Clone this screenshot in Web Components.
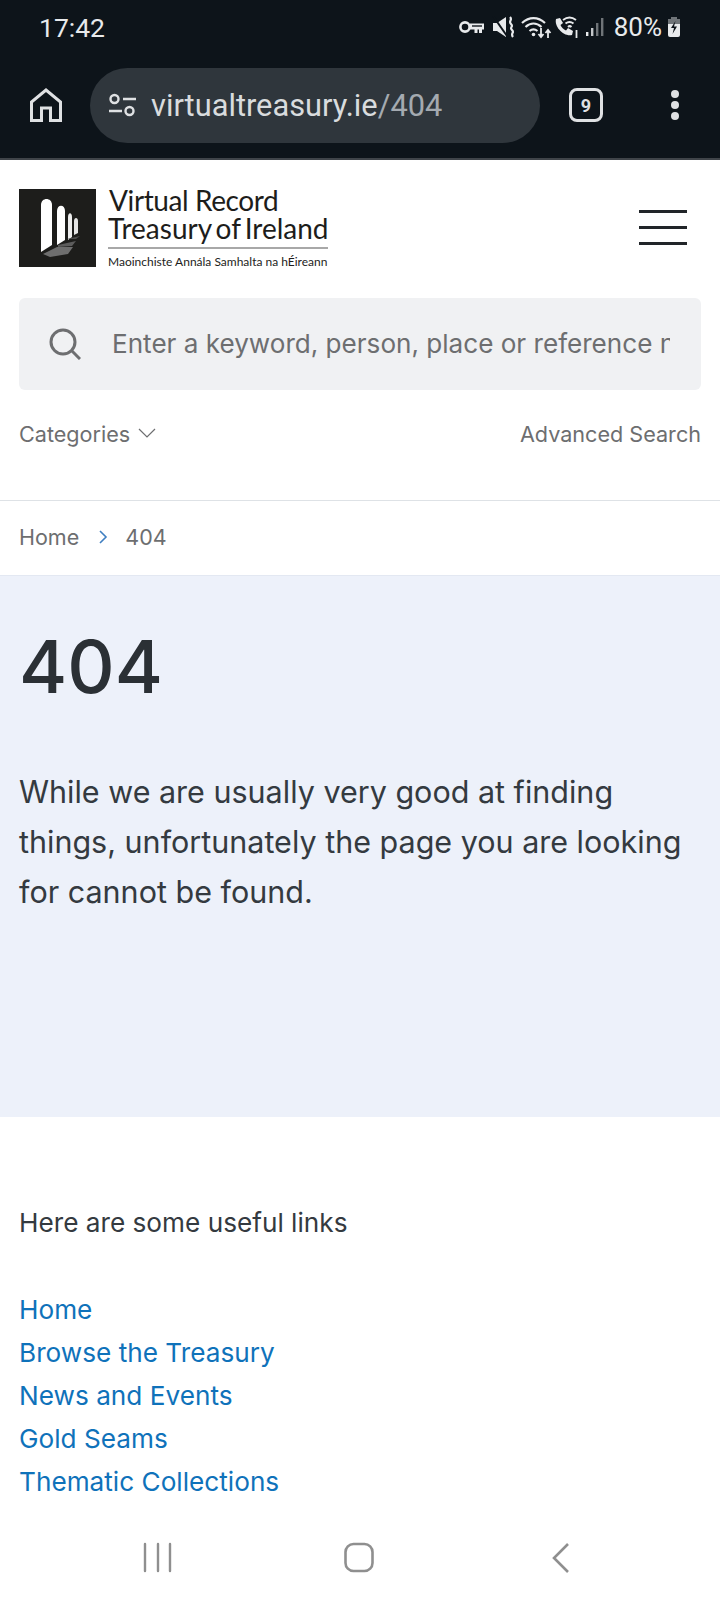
<!DOCTYPE html>
<html lang="en">
<head>
<meta charset="utf-8">
<title>404</title>
<style>
    html, body { margin: 0; padding: 0; }
    body {
        width: 720px;
        height: 1600px;
        overflow: hidden;
        display: flex;
        flex-direction: column;
        background: #fff;
        font-family: Inter, "Liberation Sans", sans-serif;
    }
    page-content { flex: 1; }
</style>
</head>
<body>
<phone-status></phone-status>
<browser-bar url="virtualtreasury.ie" path="/404" tabs="9"></browser-bar>
<page-content>
    <site-header></site-header>
    <search-box placeholder="Enter a keyword, person, place or reference n"></search-box>
    <search-options></search-options>
    <bread-crumb current="404">Home</bread-crumb>
    <error-panel heading="404">While we are usually very good at finding things, unfortunately the page you are looking for cannot be found.</error-panel>
    <useful-links heading="Here are some useful links">
        <a href="#">Home</a>
        <a href="#">Browse the Treasury</a>
        <a href="#">News and Events</a>
        <a href="#">Gold Seams</a>
        <a href="#">Thematic Collections</a>
    </useful-links>
</page-content>
<nav-buttons></nav-buttons>

<script>
class PhoneStatus extends HTMLElement {
    constructor() {
        super();
        this.attachShadow({ mode: 'open' });
        this.shadowRoot.innerHTML = `
            <style>
                :host {
                    display: flex;
                    align-items: center;
                    height: 52px;
                    box-sizing: border-box;
                    padding: 2px 39px 0 39px;
                    background: #0d141a;
                    color: #e8eaec;
                    font-family: Roboto, sans-serif;
                    font-size: 26.500px;
                }
                .time { flex: 1; }
                .icons { display: flex; align-items: center; }
                svg { display: block; }
                .pct { margin: 0 5px 0 9px; font-size: 26px; }
            </style>
            <span class="time">17:42</span>
            <div class="icons">
                <svg width="25" height="14" viewBox="0 0 25 14" style="margin-right:8px">
                    <circle cx="6" cy="7" r="4.600" fill="none" stroke="#e8eaec" stroke-width="2.600"/>
                    <path d="M11 3.500h14v6h-2v3.500h-3v-3.500h-1.500v3.500h-3v-3.500H11z" fill="#e8eaec"/>
                    <path d="M13 6h10" stroke="#0d141a" stroke-width="1.400"/>
                </svg>
                <svg width="22" height="22" viewBox="0 0 22 22" style="margin-right:7px">
                    <path d="M1 7h4l9-6v20l-9-6H1z" fill="#e8eaec"/>
                    <path d="M1 0l14 20" stroke="#0d141a" stroke-width="2"/>
                    <path d="M18 1c3 3-2 4 1 7s-2 3 1 6-2 3 1 7" fill="none" stroke="#e8eaec" stroke-width="2.200"/>
                </svg>
                <svg width="31" height="23" viewBox="0 0 31 23" style="margin-right:2px">
                    <path d="M1 7C8 .5 17 .5 24 7M4.500 11c5-4.500 11-4.500 16 0M8.500 15c2.500-2 5.500-2 8 0" fill="none" stroke="#e8eaec" stroke-width="2.200"/>
                    <circle cx="12.500" cy="18.500" r="1.800" fill="#e8eaec"/>
                    <path d="M20 12v8M17.500 18l2.500 3 2.500-3M27 22v-8M24.500 17l2.500-3 2.500 3" fill="none" stroke="#e8eaec" stroke-width="1.800"/>
                </svg>
                <svg width="25" height="23" viewBox="0 0 25 23" style="margin-right:6px">
                    <path d="M2 3l4-1 3 5-2.500 2c1 2.500 3 4.500 5.500 5.500L14 12l5 3-1 4c-8 2-18-8-16-16z" fill="#e8eaec"/>
                    <path d="M9 4c4-3 9-3 13 0M11.500 7.500c2.500-2 5.500-2 8 0M14 11c1-1 2.500-1 3.500 0" fill="none" stroke="#e8eaec" stroke-width="1.900"/>
                    <path d="M22.500 14v8" stroke="#e8eaec" stroke-width="1.800"/>
                </svg>
                <svg width="20" height="20" viewBox="0 0 20 20">
                    <rect x="1" y="15" width="2.400" height="4" fill="#e8eaec"/>
                    <rect x="6" y="11" width="2.400" height="8" fill="#c4c7ca"/>
                    <rect x="11" y="6" width="2.400" height="13" fill="#6f7478"/>
                    <rect x="16" y="1" width="2.400" height="18" fill="#6f7478"/>
                </svg>
                <span class="pct">80%</span>
                <svg width="14" height="20" viewBox="0 0 14 20">
                    <path d="M4 0h6v2H4z" fill="#6f7478"/>
                    <path d="M1 2h12v5H1z" fill="#6f7478"/>
                    <path d="M1 7h12v11a2 2 0 0 1-2 2H3a2 2 0 0 1-2-2z" fill="#e8eaec"/>
                    <path d="M8.500 4L4 11h3l-1.500 6L10 9.500H7z" fill="#0d141a"/>
                </svg>
            </div>
        `;
    }
}

class BrowserBar extends HTMLElement {
    constructor() {
        super();
        this.attachShadow({ mode: 'open' });
    }

    connectedCallback() {
        const url = this.getAttribute('url');
        const path = this.getAttribute('path');
        const tabs = this.getAttribute('tabs');
        this.shadowRoot.innerHTML = `
            <style>
                :host {
                    display: flex;
                    align-items: center;
                    height: 108px;
                    box-sizing: border-box;
                    padding: 0 0 0 30px;
                    background: #0d141a;
                    border-bottom: 2px solid #3f4449;
                    color: #dfe1e3;
                    font-family: Roboto, sans-serif;
                }
                svg { display: block; flex: none; }
                .pill {
                    display: flex;
                    align-items: center;
                    width: 450px;
                    height: 75px;
                    box-sizing: border-box;
                    margin-left: 28px;
                    padding-left: 18px;
                    border-radius: 38px;
                    background: #2f363c;
                    font-size: 30.800px;
                }
                .url { margin-left: 15px; color: #d9dcde; }
                .path { color: #a4aab0; }
                .tabs {
                    display: flex;
                    align-items: center;
                    justify-content: center;
                    box-sizing: border-box;
                    width: 34px;
                    height: 34px;
                    margin-left: 29px;
                    border: 3px solid #dfe1e3;
                    border-radius: 8px;
                    font-size: 18px;
                    font-weight: 700;
                }
                .more { margin-left: 67px; }
            </style>
            <svg width="32" height="34" viewBox="0 0 32 34">
                <path d="M1.500 32.500V14L16 2l14.500 12v18.500h-10V20h-9v12.500z" fill="none" stroke="#dfe1e3" stroke-width="3"/>
            </svg>
            <div class="pill">
                <svg width="28" height="24" viewBox="0 0 28 24">
                    <circle cx="6.500" cy="6" r="4" fill="none" stroke="#dfe1e3" stroke-width="2.400"/>
                    <circle cx="21.500" cy="18" r="4" fill="none" stroke="#dfe1e3" stroke-width="2.400"/>
                    <path d="M15 6h13M1 18h13" stroke="#dfe1e3" stroke-width="2.400"/>
                </svg>
                <span class="url">${url}<span class="path">${path}</span></span>
            </div>
            <div class="tabs">${tabs}</div>
            <svg class="more" width="10" height="32" viewBox="0 0 10 32">
                <circle cx="5" cy="5" r="4" fill="#dfe1e3"/>
                <circle cx="5" cy="16" r="4" fill="#dfe1e3"/>
                <circle cx="5" cy="27" r="4" fill="#dfe1e3"/>
            </svg>
        `;
    }
}

class SiteHeader extends HTMLElement {
    constructor() {
        super();
        this.attachShadow({ mode: 'open' });
        this.shadowRoot.innerHTML = `
            <style>
                :host {
                    display: flex;
                    align-items: flex-start;
                    justify-content: space-between;
                    height: 138px;
                    box-sizing: border-box;
                    padding: 29px 33px 0 19px;
                }
                .logo { display: flex; gap: 12px; }
                .mark { display: block; flex: none; }
                .words {
                    width: 220px;
                    margin-top: -2px;
                    font-family: Lato, sans-serif;
                    color: #1d1d1b;
                }
                .big {
                    height: 28px;
                    padding-left: 1px;
                    font-size: 28px;
                    line-height: 27px;
                    letter-spacing: -0.4px;
                    white-space: nowrap;
                }
                .tight { padding-left: 0; word-spacing: -3px; letter-spacing: 0; }
                .small {
                    margin-top: 4px;
                    padding-top: 6px;
                    border-top: 2px solid #a8a8a8;
                    font-size: 12px;
                    line-height: 13px;
                    white-space: nowrap;
                }
                .burger {
                    display: flex;
                    flex-direction: column;
                    gap: 13px;
                    width: 48px;
                    margin-top: 21px;
                }
                .burger i { display: block; height: 3px; background: #212529; }
            </style>
            <div class="logo">
                <svg class="mark" width="77" height="78" viewBox="0 0 77 78">
                    <rect width="77" height="78" fill="#1d1d1b"/>
                    <path d="M22 63V16c0-8 11-8 11 0v40z" fill="#fff"/>
                    <path d="M38 56V22c0-7 8-7 8 0v29z" fill="#fff"/>
                    <path d="M49 51V28c0-5 4-5 4 0v20z" fill="#eee"/>
                    <path d="M55 46V32c0-4 4-4 4 0v12z" fill="#e4e4e4"/>
                    <path d="M24 65l14-7h16l-5 7-18 3z" fill="#6e6e6e"/>
                    <path d="M39 56l18-4-4 5-14 1z" fill="#5c5c5c"/>
                    <path d="M48 50l13-3-4 3z" fill="#4c4c4c"/>
                </svg>
                <div class="words">
                    <div class="big">Virtual Record</div>
                    <div class="big tight">Treasury of Ireland</div>
                    <div class="small">Maoinchiste Annála Samhalta na hÉireann</div>
                </div>
            </div>
            <div class="burger"><i></i><i></i><i></i></div>
        `;
    }
}

class SearchBox extends HTMLElement {
    constructor() {
        super();
        this.attachShadow({ mode: 'open' });
    }

    connectedCallback() {
        this.shadowRoot.innerHTML = `
            <style>
                :host {
                    display: flex;
                    align-items: center;
                    height: 92px;
                    box-sizing: border-box;
                    margin: 0 19px;
                    padding: 0 31px 0 30px;
                    background: #f0f1f3;
                    border-radius: 6px;
                    color: #6d6e70;
                    font-family: Inter, sans-serif;
                    font-size: 26.100px;
                }
                svg { display: block; flex: none; margin-right: 31px; }
                span { overflow: hidden; white-space: nowrap; margin-bottom: 2px; }
            </style>
            <svg width="32" height="32" viewBox="0 0 32 32">
                <circle cx="14" cy="14" r="12" fill="none" stroke="#6d6e70" stroke-width="3"/>
                <path d="M23 23l8 8" stroke="#6d6e70" stroke-width="3"/>
            </svg>
            <span>${this.getAttribute('placeholder')}</span>
        `;
    }
}

class SearchOptions extends HTMLElement {
    constructor() {
        super();
        this.attachShadow({ mode: 'open' });
        this.shadowRoot.innerHTML = `
            <style>
                :host {
                    display: flex;
                    align-items: center;
                    justify-content: space-between;
                    height: 111px;
                    box-sizing: border-box;
                    padding: 0 19px 23px;
                    border-bottom: 1px solid #dee2e6;
                    color: #6d6e70;
                    font-family: Inter, sans-serif;
                    font-size: 21.600px;
                }
                .cat { display: flex; align-items: center; gap: 8px; }
                svg { display: block; }
            </style>
            <span class="cat">Categories
                <svg width="18" height="11" viewBox="0 0 18 11">
                    <path d="M1 1l8 8 8-8" fill="none" stroke="#6d6e70" stroke-width="1.200"/>
                </svg>
            </span>
            <span>Advanced Search</span>
        `;
    }
}

class BreadCrumb extends HTMLElement {
    constructor() {
        super();
        this.attachShadow({ mode: 'open' });
    }

    connectedCallback() {
        this.shadowRoot.innerHTML = `
            <style>
                :host {
                    display: flex;
                    align-items: center;
                    height: 75px;
                    box-sizing: border-box;
                    padding: 0 19px 2px;
                    border-bottom: 1px solid #e3e8f2;
                    color: #6d6e70;
                    font-family: Inter, sans-serif;
                    font-size: 21.500px;
                }
                svg { display: block; margin: 0 17px 0 20px; }
            </style>
            <slot></slot>
            <svg width="9" height="14" viewBox="0 0 9 14">
                <path d="M1 1l6 6-6 6" fill="none" stroke="#3f7fc1" stroke-width="1.600"/>
            </svg>
            <span>${this.getAttribute('current')}</span>
        `;
    }
}

class ErrorPanel extends HTMLElement {
    constructor() {
        super();
        this.attachShadow({ mode: 'open' });
    }

    connectedCallback() {
        this.shadowRoot.innerHTML = `
            <style>
                :host {
                    display: block;
                    height: 541px;
                    box-sizing: border-box;
                    padding: 43px 19px 0;
                    background: #edf1fa;
                    font-family: Inter, sans-serif;
                }
                h1 {
                    margin: 0 0 52px;
                    color: #2b3035;
                    font-size: 73.500px;
                    font-weight: 500;
                    line-height: 96px;
                }
                p {
                    margin: 0;
                    color: #343a40;
                    font-size: 30.500px;
                    line-height: 50px;
                }
            </style>
            <h1>${this.getAttribute('heading')}</h1>
            <p><slot></slot></p>
        `;
    }
}

class UsefulLinks extends HTMLElement {
    constructor() {
        super();
        this.attachShadow({ mode: 'open' });
    }

    connectedCallback() {
        this.shadowRoot.innerHTML = `
            <style>
                :host {
                    display: block;
                    padding: 88px 19px 0;
                    font-family: Inter, sans-serif;
                    font-size: 26.200px;
                }
                p { margin: 0 0 47px; color: #343a40; line-height: 36px; }
                div { display: flex; flex-direction: column; }
                ::slotted(a) {
                    color: #0f72ba;
                    line-height: 43px;
                    text-decoration: none;
                }
            </style>
            <p>${this.getAttribute('heading')}</p>
            <div><slot></slot></div>
        `;
    }
}

class NavButtons extends HTMLElement {
    constructor() {
        super();
        this.attachShadow({ mode: 'open' });
        this.shadowRoot.innerHTML = `
            <style>
                :host {
                    display: block;
                    height: 80px;
                    background: #fff;
                }
                svg { display: block; }
            </style>
            <svg width="720" height="80" viewBox="0 0 720 80" fill="none" stroke="#8f8f8f">
                <path d="M145 24v27M158 24v27M170 24v27" stroke-width="2.400" stroke-linecap="round"/>
                <rect x="345.500" y="24" width="27" height="27" rx="8" stroke-width="2.600"/>
                <path d="M568 24l-14 14 14 14" stroke-width="2.600"/>
            </svg>
        `;
    }
}

customElements.define('phone-status', PhoneStatus);
customElements.define('browser-bar', BrowserBar);
customElements.define('site-header', SiteHeader);
customElements.define('search-box', SearchBox);
customElements.define('search-options', SearchOptions);
customElements.define('bread-crumb', BreadCrumb);
customElements.define('error-panel', ErrorPanel);
customElements.define('useful-links', UsefulLinks);
customElements.define('nav-buttons', NavButtons);
</script>
</body>
</html>
